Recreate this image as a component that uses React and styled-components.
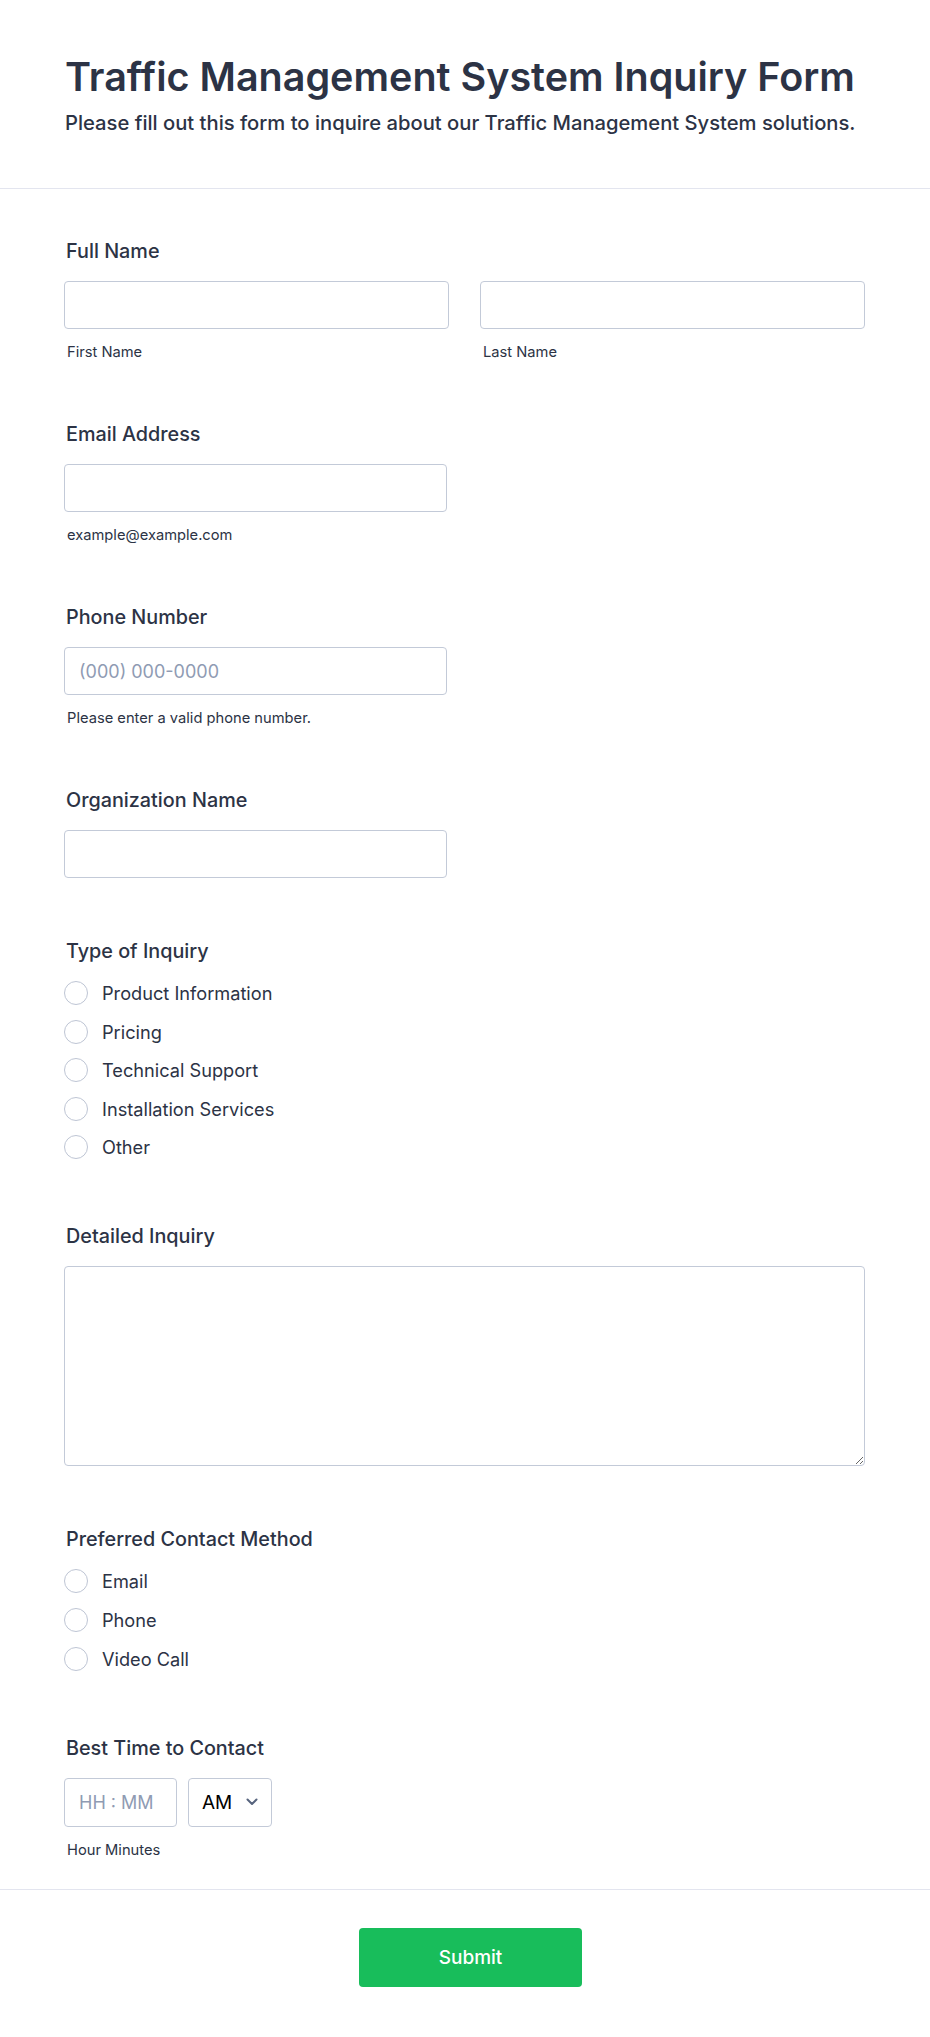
import React from 'react';
import styled, { createGlobalStyle } from 'styled-components';

const GlobalStyle = createGlobalStyle`
  body {
    margin: 0;
    background: #fff;
    font-family: Inter, "Noto Sans", sans-serif;
    color: #2c3345;
  }
  * { box-sizing: border-box; }
`;

const Page = styled.div`
  width: 100%;
  background: #fff;
`;

const Header = styled.header`
  padding: 53px 64px 52px;
  border-bottom: 1px solid #e3e5ef;
`;
const Title = styled.h1`
  margin: 0 0 8px;
  padding-left: 1px;
  font-size: 39.5px;
  line-height: 48px;
  font-weight: 600;
  color: #2c3345;
`;
const Subtitle = styled.p`
  margin: 0;
  padding-left: 1px;
  font-size: 20.2px;
  line-height: 27px;
  font-weight: 500;
  color: #2c3345;
`;

const Body = styled.div`
  padding: 49px 64px 30px;
  display: flex;
  flex-direction: column;
  gap: 60px;
`;
const Field = styled.div`
  display: flex;
  flex-direction: column;
`;
const Label = styled.label`
  padding-left: 2px;
  font-size: 19.8px;
  line-height: 27px;
  font-weight: 500;
  margin-bottom: ${(p) => (p.$options ? '12px' : '16px')};
`;
const Row = styled.div`
  display: flex;
  gap: ${(p) => p.$gap || 31}px;
`;
const Col = styled.div`
  display: flex;
  flex-direction: column;
`;
const Input = styled.input`
  width: ${(p) => p.$w || 383}px;
  height: ${(p) => p.$h || 48}px;
  border: 1px solid #c3cad8;
  border-radius: 4px;
  padding: 0 14px;
  font-family: inherit;
  font-size: 18px;
  color: #2c3345;
  background: #fff;
  outline: none;
  &::placeholder { color: #8f9bb3; }
`;
const Sub = styled.span`
  margin-top: 15px;
  padding-left: 3px;
  font-size: 14.7px;
  line-height: 17px;
  color: #2c3345;
`;
const TextArea = styled.textarea`
  width: 801px;
  height: 200px;
  border: 1px solid #c3cad8;
  border-radius: 4px;
  padding: 10px 14px;
  font-family: inherit;
  font-size: 18px;
  outline: none;
`;
const Options = styled.div`
  display: flex;
  flex-direction: column;
  gap: 6.6px;
`;
const Option = styled.label`
  display: flex;
  align-items: center;
  gap: 14px;
  height: 32px;
  font-size: 18.2px;
  color: #2c3345;
`;
const Circle = styled.span`
  width: 24px;
  height: 24px;
  border: 1px solid #bec5d4;
  border-radius: 50%;
  background: #fff;
  flex-shrink: 0;
`;
const SelectWrap = styled.div`
  position: relative;
  width: 84px;
  height: 49px;
`;
const Select = styled.select`
  width: 100%;
  height: 100%;
  appearance: none;
  border: 1px solid #c3cad8;
  border-radius: 4px;
  padding: 0 0 0 13px;
  font-family: inherit;
  font-size: 19px;
  color: #000;
  background: #fff;
  outline: none;
`;
const Chevron = styled.svg`
  position: absolute;
  right: 14px;
  top: 50%;
  transform: translateY(-50%);
  pointer-events: none;
`;

const Footer = styled.div`
  border-top: 1px solid #e3e5ef;
  padding: 38px 0 50px;
  display: flex;
  justify-content: center;
`;
const Submit = styled.button`
  width: 223px;
  height: 59px;
  margin-left: 11px;
  border: none;
  border-radius: 4px;
  background: #18bd5b;
  color: #fff;
  font-family: inherit;
  font-size: 19px;
  font-weight: 500;
  cursor: pointer;
`;

function Radios({ items }) {
  return (
    <Options>
      {items.map((item) => (
        <Option key={item}>
          <Circle />
          {item}
        </Option>
      ))}
    </Options>
  );
}

export default function App() {
  return (
    <Page>
      <GlobalStyle />
      <Header>
        <Title>Traffic Management System Inquiry Form</Title>
        <Subtitle>
          Please fill out this form to inquire about our Traffic Management System solutions.
        </Subtitle>
      </Header>

      <Body>
        <Field>
          <Label>Full Name</Label>
          <Row>
            <Col>
              <Input $w={385} />
              <Sub>First Name</Sub>
            </Col>
            <Col>
              <Input $w={385} />
              <Sub>Last Name</Sub>
            </Col>
          </Row>
        </Field>

        <Field>
          <Label>Email Address</Label>
          <Input />
          <Sub>example@example.com</Sub>
        </Field>

        <Field>
          <Label>Phone Number</Label>
          <Input placeholder="(000) 000-0000" />
          <Sub>Please enter a valid phone number.</Sub>
        </Field>

        <Field>
          <Label>Organization Name</Label>
          <Input />
        </Field>

        <Field>
          <Label $options>Type of Inquiry</Label>
          <Radios
            items={[
              'Product Information',
              'Pricing',
              'Technical Support',
              'Installation Services',
              'Other',
            ]}
          />
        </Field>

        <Field>
          <Label>Detailed Inquiry</Label>
          <TextArea />
        </Field>

        <Field>
          <Label $options>Preferred Contact Method</Label>
          <Radios items={['Email', 'Phone', 'Video Call']} />
        </Field>

        <Field>
          <Label>Best Time to Contact</Label>
          <Row $gap={11}>
            <Input $w={113} $h={49} placeholder="HH : MM" />
            <SelectWrap>
              <Select defaultValue="AM">
                <option>AM</option>
                <option>PM</option>
              </Select>
              <Chevron width="12" height="8" viewBox="0 0 12 8">
                <path d="M1.5 1.5 L6 6 L10.5 1.5" fill="none" stroke="#57647e" strokeWidth="2" strokeLinecap="round" strokeLinejoin="round" />
              </Chevron>
            </SelectWrap>
          </Row>
          <Sub>Hour Minutes</Sub>
        </Field>
      </Body>

      <Footer>
        <Submit>Submit</Submit>
      </Footer>
    </Page>
  );
}
